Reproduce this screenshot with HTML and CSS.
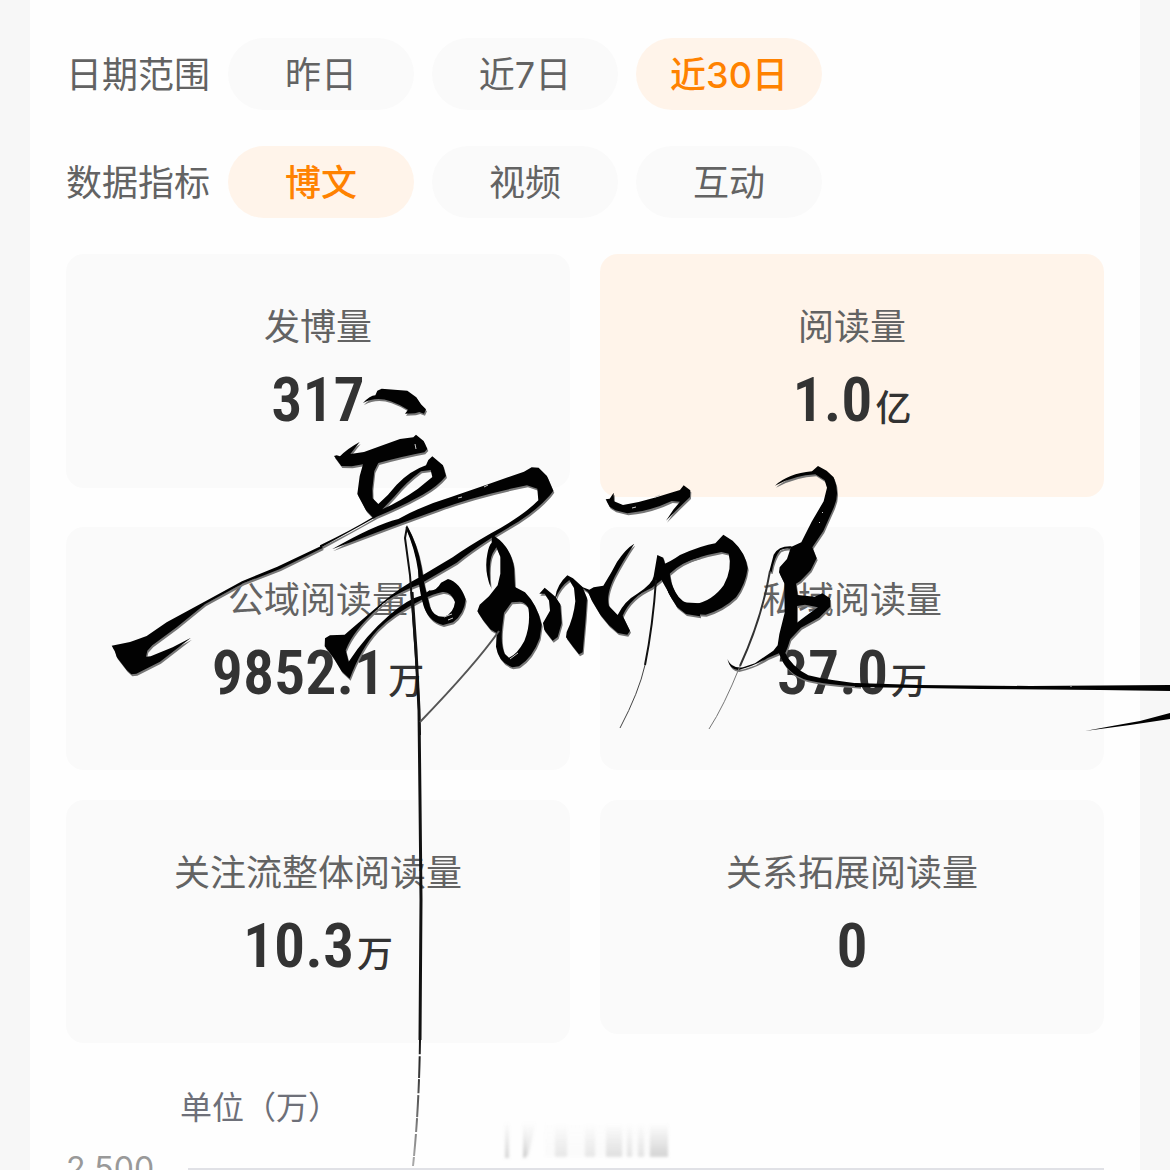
FILE: index.html
```html
<!DOCTYPE html>
<html lang="zh-CN">
<head>
<meta charset="UTF-8">
<meta name="viewport" content="width=device-width, initial-scale=1.0">
<title>数据概览</title>
<link rel="stylesheet" href="styles.css">
</head>
<body>

<main class="panel">
  <div class="filters">
    <div class="filter" role="group" aria-labelledby="rangeLabel">
      <span id="rangeLabel" class="filter-label">日期范围</span>
      <button type="button" class="pill">昨日</button>
      <button type="button" class="pill">近7日</button>
      <button type="button" class="pill active" aria-pressed="true">近30日</button>
    </div>
    <div class="filter" role="group" aria-labelledby="metricLabel">
      <span id="metricLabel" class="filter-label">数据指标</span>
      <button type="button" class="pill active" aria-pressed="true">博文</button>
      <button type="button" class="pill">视频</button>
      <button type="button" class="pill">互动</button>
    </div>
  </div>

  <div class="cards">
    <div class="card">
      <div class="name">发博量</div>
      <div class="value">317</div>
    </div>
    <div class="card selected">
      <div class="name">阅读量</div>
      <div class="value with-unit">1.0<span class="unit">亿</span></div>
    </div>
    <div class="card">
      <div class="name">公域阅读量</div>
      <div class="value with-unit">9852.1<span class="unit">万</span></div>
    </div>
    <div class="card">
      <div class="name">私域阅读量</div>
      <div class="value with-unit">37.0<span class="unit">万</span></div>
    </div>
    <div class="card">
      <div class="name">关注流整体阅读量</div>
      <div class="value with-unit">10.3<span class="unit">万</span></div>
    </div>
    <div class="card">
      <div class="name">关系拓展阅读量</div>
      <div class="value">0</div>
    </div>
  </div>

  <div class="chart">
    <div class="chart-unit">单位（万）</div>
    <div class="tick">
      <span class="tick-label">2,500</span>
      <span class="tick-line"></span>
    </div>
  </div>
</main>

<svg class="signature" viewBox="0 0 1170 1170" aria-hidden="true">
  <defs>
    <linearGradient id="fade" x1="0" y1="0" x2="0" y2="1">
      <stop offset="0" stop-color="#999" stop-opacity="0"/>
      <stop offset="1" stop-color="#999" stop-opacity=".4"/>
    </linearGradient>
    <linearGradient id="fadeLine" gradientUnits="userSpaceOnUse" x1="0" y1="1040" x2="0" y2="1166">
      <stop offset="0" stop-color="#111"/>
      <stop offset="1" stop-color="#111" stop-opacity=".35"/>
    </linearGradient>
    <filter id="soft" x="-10%" y="-20%" width="120%" height="140%">
      <feGaussianBlur stdDeviation="1.5"/>
    </filter>

    <!-- brush bodies, reused once as the grey dry edge -->
    <g id="brush" fill-rule="evenodd">
      <g transform="translate(320 370) scale(.3333)">
        <path d="M129 99 Q150 77 166 76 L172 62 L185 56 L262 62 L289 82 L303 103 L318 118 L312 131 L298 126 L285 130 L255 131 L264 119 Q240 104 212 94 Q168 78 129 99Z"/>
        <path d="M42 258 L50 256 L60 259 Q82 236 119 216 L91 252 L132 246 L190 225 L240 207 L280 202 L288 194 L311 213 L322 237 L313 247 Q254 258 175 279 L163 303 L157 356 L158 385 L175 402 Q205 376 230 344 Q273 301 318 286 L325 270 L337 259 L369 286 L378 318 Q352 350 308 374 Q240 412 170 440 Q80 490 0 534 L0 526 Q92 482 158 442 L138 421 L112 372 L119 319 L129 283 L95 289 L64 288Z M187 418 Q243 392 294 356 L337 321 L332 300 L303 304 Q258 337 224 379Z"/>
        <path d="M36 538 Q160 466 235 447 Q302 409 391 382 L500 344 L612 305 L635 292 L656 293 L681 318 L700 362 L690 376 Q651 420 595 455 L515 503 Q450 545 410 578 L312 635 L305 617 L398 562 Q440 532 513 490 Q611 436 655 391 L652 356 L621 346 Q475 375 355 419 Q224 466 36 538Z"/>
      </g>
      <g transform="translate(100 520) scale(.3333)">
        <path d="M665 77 L532 140 L426 184 L312 246 L200 307 L140 348 L105 361 L90 366 L35 377 L44 392 L50 411 L80 450 L94 463 L109 461 L180 425 L210 402 L273 353 L218 382 L152 409 L138 410 L142 392 L157 376 L230 322 L315 253 L430 190 L540 147 L668 84Z"/>
      </g>
      <g transform="translate(310 520) scale(.3333)">
        <path d="M45 355 L60 346 L104 344 Q181 278 219 246 Q268 203 335 168 L342 188 Q240 224 203 267 Q128 333 107 391 L116 425 Q167 347 235 288 Q292 237 337 226 L359 211 Q379 213 393 188 L414 177 Q450 187 467 238 Q463 282 429 307 L399 315 Q350 304 337 244 Q325 198 324 151 Q315 86 287 23 L291 16 Q322 72 334 137 Q342 199 360 260 Q371 292 403 290 Q431 280 435 246 Q423 213 397 216 Q369 222 338 238 Q247 284 203 330 Q155 382 119 476 L95 454 L71 414 L44 379Z" fill-rule="nonzero"/>
      </g>
      <g transform="translate(460 460) scale(.3333)">
        <path d="M96 223 L119 240 Q154 272 162 321 L165 381 L195 397 Q232 434 245 494 L239 535 Q218 593 177 619 L157 622 Q115 606 108 560 L110 519 L91 508 L69 480 L52 454 L59 434 L87 409 L113 376 L121 341 L121 290 L109 262 L98 280 Q84 309 92 382 Q72 331 82 282 Q86 257 95 248Z M132 458 L127 499 Q121 552 134 581 L147 593 Q171 584 193 543 Q213 493 205 443 Q195 427 180 425 L155 427Z"/>
        <path d="M238 401 L254 383 L274 400 L286 410 Q292 373 322 346 L339 355 L367 380 L381 415 L377 475 L368 577 L357 583 L338 559 L318 532 L320 516 Q341 473 346 424 L342 383 L328 360 Q300 381 288 413 L301 433 L305 489 L293 531 L278 542 L253 510 L249 489 L270 452 L267 421 L254 401Z"/>
        <path d="M357 377 L388 389 L401 382 L430 377 Q454 339 471 306 Q498 265 523 251 Q488 304 464 350 Q437 405 447 438 L473 465 Q493 423 532 401 Q578 372 581 349 L592 285 L610 293 L616 315 L629 320 Q666 292 720 275 L720 291 Q666 306 629 341 Q633 391 665 427 L720 430 L720 469 L678 462 L651 441 L625 398 L611 355 L576 383 Q512 411 488 467 L510 512 L502 524 L474 519 L447 496 L421 464 L395 421 L384 396Z"/>
        <path d="M437 118 L449 116 L461 98 L462 124 L489 135 L536 126 L589 112 L628 100 L660 90 L671 76 L691 91 L690 111 L666 134 L618 182 L640 149 L660 125 L635 123 Q571 154 502 160 L466 151 L449 140Z"/>
      </g>
      <g transform="translate(660 450) scale(.3333)">
        <path d="M0 347 Q29 337 60 315 Q127 286 166 280 L190 254 L218 272 Q257 308 263 355 Q257 403 228 442 Q188 480 137 494 L83 491 Q43 469 24 424 L0 382Z M29 357 Q26 390 46 426 Q65 462 101 464 Q157 454 191 406 Q218 356 206 311 L184 306 Q100 321 29 357Z"/>
        <path d="M345 107 Q384 71 456 64 L474 48 L500 62 L521 82 Q541 128 522 171 L490 243 L457 292 L470 325 L452 361 L421 393 L408 401 L413 435 L464 440 L487 430 L510 445 L511 470 L477 503 L423 533 L391 567 L383 592 L376 609 Q394 649 445 676 Q500 690 600 701 L600 710 Q498 704 443 691 Q378 673 357 610 L323 624 Q282 649 235 660 Q210 659 202 627 Q215 657 249 652 L285 640 L340 602 L353 586 L358 553 L374 488 L373 400 L357 367 L359 352 L381 327 L393 291 L424 277 L455 215 L491 154 L501 113 L494 91 L466 73 Q407 75 345 107Z M411 468 L411 518 Q451 488 474 472 L435 464Z"/>
        <path d="M395 289 Q356 287 341 314 L328 364 L335 366 Q344 318 361 301 Q373 293 391 296Z"/>
      </g>
    </g>
  </defs>

  <use class="dry" href="#brush" x="1" y="2"/>
  <use class="ink" href="#brush"/>

  <!-- long flat strokes running off the right side -->
  <g class="ink">
    <path d="M855 683 L920 685 L1030 686 L1170 685 L1170 691 L1100 690 L980 689 L855 687Z"/>
    <path d="M1085 731 L1112 726 L1140 721 L1170 713 L1170 719 L1130 725Z"/>
  </g>

  <g class="hair">
    <path stroke-width="2" d="M407 527 L405 538 L410 575 L414 630 L418 687 L420 735"/>
    <path stroke-width="3" d="M412 592 L416 650 L419 710 L420 800 L421 900 L420 1040"/>
    <path stroke="url(#fadeLine)" stroke-width="2" stroke-dasharray="14 2 22 1" d="M420 1040 Q419 1110 413 1166"/>
    <path stroke="#555" stroke-width="2" d="M499 631 Q475 665 420 722"/>
    <path stroke-width="2" d="M656 580 Q653 625 645 665"/>
    <path stroke="#444" stroke-width="1" d="M645 665 Q639 692 620 728"/>
    <path stroke="#333" stroke-width="2" d="M770 571 Q762 618 740 666"/>
    <path stroke="#777" stroke-width="1" d="M740 666 Q724 706 709 729"/>
  </g>

  <!-- dry specks left by the brush -->
  <g class="specks">
    <path d="M415 444 l1 5 M484 487 l4 -2 M458 498 l4 -1 M444 617 l8 -3 M448 620 l5 -2 M510 659 l8 -6 M632 508 l4 -1 M655 497 l5 -2 M822 512 l1 1 M819 522 l1 1 M1004 685 v1 M1071 686 v1"/>
  </g>

  <!-- faint smudge above the axis -->
  <g filter="url(#soft)" fill="url(#fade)">
    <rect x="505" y="1122" width="4" height="36"/>
    <rect x="523" y="1122" width="3" height="36"/>
    <path d="M527 1122 h9 l-8 34 h-4z" opacity=".7"/>
    <rect x="555" y="1124" width="12" height="33" opacity=".5"/>
    <rect x="585" y="1124" width="10" height="33" opacity=".5"/>
    <rect x="606" y="1124" width="16" height="33" opacity=".7"/>
    <rect x="627" y="1124" width="5" height="33" opacity=".6"/>
    <rect x="638" y="1124" width="6" height="33" opacity=".6"/>
    <rect x="650" y="1124" width="18" height="33"/>
    <rect x="545" y="1120" width="123" height="36" opacity=".1"/>
  </g>
</svg>

</body>
</html>
```
FILE: styles.css
```css
* {
  box-sizing: border-box;
}
body {
  position: relative;
  height: 100vh;
  margin: 0;
  padding: 0 30px;
  overflow: hidden;
  background-color: #f7f7f7;
  color: #636363;
  font-family: Inter, "Noto Sans CJK SC", sans-serif;
  font-size: 36px;
}
.panel {
  min-height: 100%;
  padding: 38px 36px 0;
  background-color: #fefefe;
}
.filters {
  display: flex;
  flex-direction: column;
  gap: 36px;
  margin-bottom: 36px;
}
.filter {
  display: flex;
  align-items: center;
  gap: 18px;
}
.filter-label {
  width: 144px;
  padding-bottom: 4px;
  white-space: nowrap;
}
.pill {
  width: 186px;
  height: 72px;
  padding: 0 0 4px;
  border: none;
  border-radius: 36px;
  background-color: #fafafa;
  color: #636363;
  font: inherit;
  cursor: pointer;
}
.pill.active {
  background-color: #fff4ea;
  color: #ff8200;
  font-weight: 500;
}
.cards {
  display: grid;
  grid-template-columns: 1fr 1fr;
  align-items: start;
  gap: 30px;
}
.card {
  padding: 48px 0 54px;
  border-radius: 18px;
  background-color: #fafafa;
  text-align: center;
}
.card.selected {
  background-color: #fff4ea;
}
.name {
  line-height: 50px;
}
.value {
  margin-top: 10px;
  height: 72px;
  color: #333;
  font-family: "Roboto Condensed", Roboto, sans-serif;
  font-size: 62px;
  font-weight: 600;
  line-height: 76px;
}
.value.with-unit {
  height: 81px;
}
.unit {
  margin-left: 3px;
  font-family: "Noto Sans CJK SC", sans-serif;
  font-size: 36px;
  font-weight: 500;
  line-height: 36px;
}
.chart {
  padding-top: 40px;
}
.chart-unit {
  padding-left: 114px;
  color: #6e7079;
  font-size: 32px;
  line-height: 50px;
}
.tick {
  display: flex;
  align-items: center;
  gap: 32px;
  margin-top: 16px;
}
.tick-label {
  width: 90px;
  color: #999;
  font-size: 32px;
  line-height: 40px;
}
.tick-line {
  flex: 1;
  height: 2px;
  background-color: #e0e1e6;
}
.signature {
  position: absolute;
  top: 0;
  left: 0;
  width: 100%;
  pointer-events: none;
}
.ink {
  fill: #020202;
}
.dry {
  fill: #777;
}
.hair {
  fill: none;
  stroke: #111;
}
.specks {
  fill: none;
  stroke: #ccc;
}
```
